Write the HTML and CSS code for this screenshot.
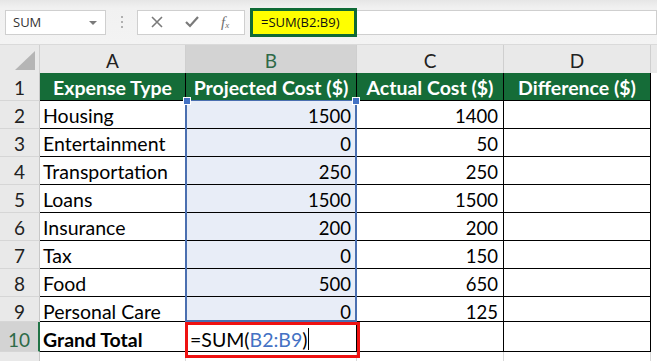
FILE: index.html
```html
<!DOCTYPE html>
<html>
<head>
<meta charset="utf-8">
<link rel="stylesheet" href="styles.css">
</head>
<body>
<div class="app">
  <div class="toolbar">
    <div class="namebox"><span>SUM</span><svg class="caret" width="10" height="6" viewBox="0 0 10 6"><path d="M1 1h8L5 5z" fill="#7a7a7a"/></svg></div>
    <div class="dots"><i></i><i></i><i></i></div>
    <div class="fxbox">
      <svg class="i-x" width="14" height="14" viewBox="0 0 14 14"><path d="M2 2l10 10M12 2L2 12" stroke="#7a7a7a" stroke-width="1.6"/></svg>
      <svg class="i-ok" width="16" height="14" viewBox="0 0 16 14"><path d="M2 7l4 4 8-9" stroke="#7a7a7a" stroke-width="2.2" fill="none"/></svg>
      <span class="fx">f<sub>x</sub></span>
    </div>
    <div class="formula-hl">=SUM(B2:B9)</div>
    <div class="formula-rest"></div>
  </div>
  <div class="sheet">
    <div class="corner"><svg width="24" height="22" viewBox="0 0 24 22"><path d="M22 2v19H2z" fill="#b5b5b5"/></svg></div>
    <div class="ch">A</div>
    <div class="ch sel">B</div>
    <div class="ch">C</div>
    <div class="ch">D</div>
    <div class="ch edge"></div>

    <div class="rh">1</div>
    <div class="hd">Expense Type</div>
    <div class="hd">Projected Cost ($)</div>
    <div class="hd">Actual Cost ($)</div>
    <div class="hd">Difference ($)</div>
    <div class="ex"></div>

    <div class="rh">2</div><div class="c">Housing</div><div class="c n b">1500</div><div class="c n">1400</div><div class="c"></div><div class="ex"></div>
    <div class="rh">3</div><div class="c">Entertainment</div><div class="c n b">0</div><div class="c n">50</div><div class="c"></div><div class="ex"></div>
    <div class="rh">4</div><div class="c">Transportation</div><div class="c n b">250</div><div class="c n">250</div><div class="c"></div><div class="ex"></div>
    <div class="rh">5</div><div class="c">Loans</div><div class="c n b">1500</div><div class="c n">1500</div><div class="c"></div><div class="ex"></div>
    <div class="rh">6</div><div class="c">Insurance</div><div class="c n b">200</div><div class="c n">200</div><div class="c"></div><div class="ex"></div>
    <div class="rh">7</div><div class="c">Tax</div><div class="c n b">0</div><div class="c n">150</div><div class="c"></div><div class="ex"></div>
    <div class="rh">8</div><div class="c">Food</div><div class="c n b">500</div><div class="c n">650</div><div class="c"></div><div class="ex"></div>
    <div class="rh low">9</div><div class="c low">Personal Care</div><div class="c n b low">0</div><div class="c n low">125</div><div class="c"></div><div class="ex"></div>
    <div class="rh rsel low">10</div><div class="c bold low">Grand Total</div><div class="c edit low">=SUM(<span class="ref">B2:B9</span>)<span class="cursor"></span></div><div class="c n"></div><div class="c"></div><div class="ex"></div>
    <div class="rh"></div><div class="c last"></div><div class="c last"></div><div class="c last"></div><div class="c last"></div><div class="ex"></div>

    <div class="selection"><i class="h1"></i><i class="h2"></i></div>
    <div class="redbox"></div>
  </div>
</div>
</body>
</html>
```

FILE: styles.css
```css
html, body {
  margin: 0;
  padding: 0;
  background: #ffffff;
}
body {
  font-family: "Lato", "Open Sans", sans-serif;
  width: 657px;
  height: 361px;
  overflow: hidden;
}
.app {
  width: 657px;
  height: 361px;
  overflow: hidden;
}
.toolbar {
  height: 45px;
  background: linear-gradient(#e6e6e6 0px, #f1f1f1 8px, #f3f3f3 100%);
  display: flex;
  align-items: center;
  box-sizing: border-box;
  border-bottom: 1px solid #dadada;
}
.namebox {
  margin-left: 5px;
  width: 101px;
  height: 25px;
  box-sizing: border-box;
  background: #fff;
  border: 1px solid #cfcfcf;
  display: flex;
  align-items: center;
  justify-content: space-between;
  padding: 0 7px 0 7px;
  font-family: "Open Sans", sans-serif;
  font-size: 13px;
  color: #333;
}
.caret { margin-top: 1px; }
.dots {
  width: 31px;
  display: flex;
  flex-direction: column;
  align-items: center;
  gap: 3px;
}
.dots i {
  width: 2px;
  height: 2px;
  background: #b0b0b0;
  display: block;
}
.fxbox {
  width: 108px;
  height: 25px;
  box-sizing: border-box;
  background: #fff;
  border: 1px solid #cfcfcf;
  display: flex;
  align-items: center;
  padding-left: 12px;
}
.i-ok { margin-left: 20px; }
.fx {
  margin-left: 21px;
  font-family: "Liberation Serif", serif;
  font-style: italic;
  font-size: 15px;
  color: #6f6f6f;
}
.fx sub { font-size: 9px; vertical-align: -1px; }
.formula-hl {
  margin-left: 5px;
  width: 107px;
  height: 29px;
  box-sizing: border-box;
  background: #ffff00;
  border: 3px solid #0f6a36;
  font-family: "Open Sans", sans-serif;
  font-size: 13px;
  color: #111;
  display: flex;
  align-items: center;
  padding-left: 8px;
}
.formula-rest {
  flex: 1;
  height: 25px;
  box-sizing: border-box;
  background: #fff;
  border: 1px solid #cfcfcf;
  border-left: none;
}
.sheet {
  position: relative;
  display: grid;
  grid-template-columns: 40px 146px 171px 147px 147px 6px;
  grid-template-rows: 28px 28px 28px 28px 28px 28px 28px 28px 28px 25px 30px 20px;
  font-size: 19.5px;
  color: #000;
}
.corner {
  background: #e9e9e9;
  border-right: 1px solid #d0d0d0;
  display: flex;
  align-items: flex-end;
  justify-content: flex-end;
  padding: 0 2px 2px 0;
  box-sizing: border-box;
}
.ch {
  background: #e9e9e9;
  border-right: 1px solid #cfcfcf;
  display: flex;
  align-items: center;
  justify-content: center;
  font-size: 19px;
  color: #222;
  box-sizing: border-box;
  padding-top: 2px;
}
.ch.sel {
  background: #d3d3d3;
  color: #2e6a48;
}
.ch.edge { border-right: none; }
.rh {
  background: #e9e9e9;
  border-right: 1px solid #c8c8c8;
  border-bottom: 1px solid #d6d6d6;
  display: flex;
  align-items: center;
  justify-content: center;
  font-size: 19px;
  color: #222;
  box-sizing: border-box;
  padding-top: 2px;
}
.rh.rsel {
  background: #d3d3d3;
  color: #2e6a48;
  border-right: 2px solid #217346;
}
.hd {
  background: #156c38;
  color: #fff;
  font-weight: bold;
  font-size: 19.5px;
  display: flex;
  align-items: center;
  justify-content: center;
  border-right: 1px solid #000;
  border-bottom: 1px solid #000;
  box-sizing: border-box;
  white-space: nowrap;
  padding-top: 2px;
}
.ex { background: #fff; }
.c {
  background: #fff;
  border-right: 1px solid #000;
  border-bottom: 1px solid #000;
  box-sizing: border-box;
  display: flex;
  align-items: center;
  padding: 2px 4px 0 3px;
  white-space: nowrap;
}
.c.last { border-bottom: none; border-right: 1px solid #d8d8d8; }
.c.n { justify-content: flex-end; padding-right: 5px; font-size: 18.5px; }
.c.b { background: #e8edf7; }
.c.bold { font-weight: bold; }
.c.edit { padding-left: 4px; }
.low { padding-top: 5px; }
.c.low { padding-top: 5px; }
.ref { color: #4472c4; }
.cursor {
  display: inline-block;
  width: 1px;
  height: 22px;
  background: #000;
  margin-left: 1px;
}
.selection {
  position: absolute;
  left: 185px;
  top: 55px;
  width: 172px;
  height: 222px;
  box-sizing: border-box;
  border: 2px solid #4a6fb0;
  border-top-width: 1px;
}
.selection i {
  position: absolute;
  width: 6px;
  height: 6px;
  background: #4472c4;
  border: 1px solid #fff;
  top: -4px;
}
.selection .h1 { left: -4px; }
.selection .h2 { right: -5px; }
.redbox {
  position: absolute;
  left: 185px;
  top: 277px;
  width: 175px;
  height: 36px;
  box-sizing: border-box;
  border: 3px solid #ee1111;
}
```
